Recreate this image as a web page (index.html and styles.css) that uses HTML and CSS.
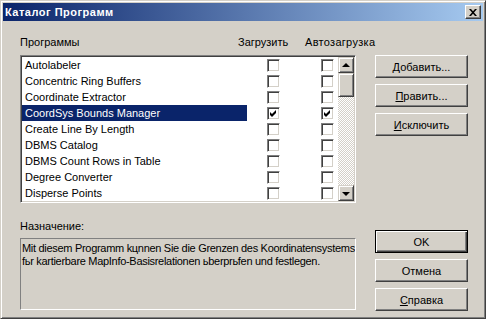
FILE: index.html
```html
<!DOCTYPE html>
<html lang="ru">
<head>
    <meta charset="UTF-8">
    <title>Каталог Программ</title>
    <link rel="stylesheet" href="styles.css">
</head>
<body>
<div class="window">
    <div class="titleBar">
        <span class="titleText">Каталог Программ</span>
        <button class="closeButton">
            <svg width="8" height="7" viewBox="0 0 8 7"><path d="M0 0h2l2 2.2L6 0h2L5 3.5 8 7H6L4 4.8 2 7H0l3-3.5z" fill="#000"/></svg>
        </button>
    </div>
    <div class="content">
        <div class="leftColumn">
            <div class="headerRow">
                <span class="headName">Программы</span>
                <span class="headLoad">Загрузить</span>
                <span class="headAuto">Автозагрузка</span>
            </div>
            <div class="listBox">
                <div class="rows">
                    <div class="row"><span class="name">Autolabeler</span><span class="check cb1"></span><span class="check cb2"></span></div>
                    <div class="row"><span class="name">Concentric Ring Buffers</span><span class="check cb1"></span><span class="check cb2"></span></div>
                    <div class="row"><span class="name">Coordinate Extractor</span><span class="check cb1"></span><span class="check cb2"></span></div>
                    <div class="row selected"><span class="name">CoordSys Bounds Manager</span><span class="check cb1"><svg width="11" height="11" viewBox="0 0 11 11"><path d="M2 4l2 2 4-4v3l-4 4-2-2z" fill="#000"/></svg></span><span class="check cb2"><svg width="11" height="11" viewBox="0 0 11 11"><path d="M2 4l2 2 4-4v3l-4 4-2-2z" fill="#000"/></svg></span></div>
                    <div class="row"><span class="name">Create Line By Length</span><span class="check cb1"></span><span class="check cb2"></span></div>
                    <div class="row"><span class="name">DBMS Catalog</span><span class="check cb1"></span><span class="check cb2"></span></div>
                    <div class="row"><span class="name">DBMS Count Rows in Table</span><span class="check cb1"></span><span class="check cb2"></span></div>
                    <div class="row"><span class="name">Degree Converter</span><span class="check cb1"></span><span class="check cb2"></span></div>
                    <div class="row"><span class="name">Disperse Points</span><span class="check cb1"></span><span class="check cb2"></span></div>
                </div>
                <div class="scrollBar">
                    <div class="scrollButton"><span class="arrowUp"></span></div>
                    <div class="scrollThumb"></div>
                    <div class="scrollTrack"></div>
                    <div class="scrollButton"><span class="arrowDown"></span></div>
                </div>
            </div>
            <div class="purposeLabel">Назначение:</div>
            <div class="purposeBox">Mit diesem Programm kцnnen Sie die Grenzen des Koordinatensystems<br>fьr kartierbare MapInfo-Basisrelationen ьberprьfen und festlegen.</div>
        </div>
        <div class="rightColumn">
            <div class="buttonGroup topGroup">
                <button class="button"><u>Д</u>обавить...</button>
                <button class="button"><u>П</u>равить...</button>
                <button class="button"><u>И</u>сключить</button>
            </div>
            <div class="buttonGroup">
                <button class="button default">OK</button>
                <button class="button">Отмена</button>
                <button class="button"><u>С</u>правка</button>
            </div>
        </div>
    </div>
</div>
</body>
</html>
```

FILE: styles.css
```css
body {
    margin: 0;
    background: #d4d0c8;
    font-family: "Liberation Sans", Arial, sans-serif;
    font-size: 11px;
    line-height: 13px;
    color: #000;
}

.window {
    box-sizing: border-box;
    width: 486px;
    height: 319px;
    padding: 2px;
    background: #d4d0c8;
    border: 1px solid;
    border-color: #d4d0c8 #404040 #404040 #d4d0c8;
    box-shadow: inset 1px 1px #fff, inset -1px -1px #808080;
    display: flex;
    flex-direction: column;
}

.titleBar {
    height: 18px;
    display: flex;
    align-items: center;
    justify-content: space-between;
    padding: 0 2px 0 2px;
    background: linear-gradient(to right, #0a246a, #a6caf0);
}

.titleText {
    color: #fff;
    font-weight: bold;
    font-size: 11px;
    letter-spacing: 0.5px;
}

.closeButton {
    box-sizing: border-box;
    width: 16px;
    height: 14px;
    padding: 0;
    display: flex;
    align-items: center;
    justify-content: center;
    background: #d4d0c8;
    border: 1px solid;
    border-color: #fff #404040 #404040 #fff;
    box-shadow: inset -1px -1px #808080;
}

.content {
    flex: 1;
    display: flex;
    gap: 19px;
    padding: 15px 15px 5px 17px;
}

.leftColumn {
    width: 336px;
    display: flex;
    flex-direction: column;
}

.headerRow {
    display: flex;
    height: 13px;
    white-space: nowrap;
}

.headerRow span {
    flex: none;
}

.headName {
    width: 218px;
}

.headLoad {
    width: 67px;
}

.headAuto {
    letter-spacing: 0.3px;
}

.listBox {
    box-sizing: border-box;
    margin-top: 6px;
    height: 148px;
    display: flex;
    background: #fff;
    border: 1px solid;
    border-color: #808080 #fff #fff #808080;
    box-shadow: inset 1px 1px #404040, inset -1px -1px #d4d0c8;
    padding: 1px;
}

.rows {
    flex: 1;
}

.row {
    height: 16px;
    display: flex;
    align-items: center;
}

.name {
    box-sizing: border-box;
    width: 225px;
    height: 16px;
    line-height: 16px;
    padding-left: 3px;
    white-space: nowrap;
}

.selected .name {
    background: #0a246a;
    color: #fff;
}

.check {
    box-sizing: border-box;
    width: 13px;
    height: 13px;
    background: #fff;
    border: 1px solid;
    border-color: #808080 #fff #fff #808080;
    box-shadow: inset 1px 1px #404040, inset -1px -1px #d4d0c8;
    display: flex;
}

.cb1 {
    margin-left: 20px;
}

.cb2 {
    margin-left: 41px;
}

.scrollBar {
    width: 16px;
    display: flex;
    flex-direction: column;
}

.scrollButton,
.scrollThumb {
    box-sizing: border-box;
    width: 16px;
    height: 16px;
    background: #d4d0c8;
    border: 1px solid;
    border-color: #d4d0c8 #404040 #404040 #d4d0c8;
    box-shadow: inset 1px 1px #fff, inset -1px -1px #808080;
    display: flex;
    align-items: center;
    justify-content: center;
}

.scrollThumb {
    height: 24px;
}

.scrollTrack {
    flex: 1;
    background: repeating-conic-gradient(#fff 0 25%, #d4d0c8 0 50%) 0 0 / 2px 2px;
}

.arrowUp {
    border: 4px solid transparent;
    border-top: 0;
    border-bottom: 4px solid #000;
    margin-bottom: 1px;
}

.arrowDown {
    border: 4px solid transparent;
    border-bottom: 0;
    border-top: 4px solid #000;
    margin-top: 1px;
}

.purposeLabel {
    margin-top: 17px;
    height: 13px;
}

.purposeBox {
    box-sizing: border-box;
    margin-top: 5px;
    height: 72px;
    padding: 3px 0 0 1px;
    border: 1px solid;
    border-color: #808080 #fff #fff #808080;
    letter-spacing: -0.3px;
    white-space: nowrap;
    overflow: hidden;
}

.rightColumn {
    width: 93px;
    display: flex;
    flex-direction: column;
    justify-content: space-between;
}

.buttonGroup {
    display: flex;
    flex-direction: column;
    gap: 6px;
}

.topGroup {
    margin-top: 19px;
}

.button {
    box-sizing: border-box;
    width: 93px;
    height: 23px;
    padding: 0;
    font-family: "Liberation Sans", Arial, sans-serif;
    font-size: 11px;
    color: #000;
    background: #d4d0c8;
    border: 1px solid;
    border-color: #fff #404040 #404040 #fff;
    box-shadow: inset -1px -1px #808080;
}

.button.default {
    border: 1px solid #000;
    box-shadow: inset 1px 1px #fff, inset -1px -1px #404040, inset -2px -2px #808080;
}
```
